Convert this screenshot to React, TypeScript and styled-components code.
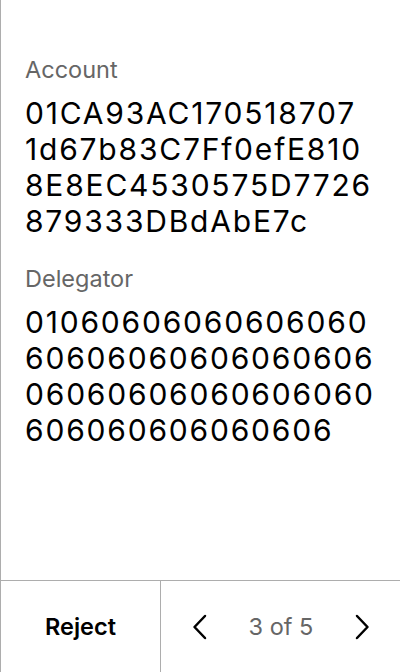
import styled, { createGlobalStyle } from 'styled-components'

const GlobalStyle = createGlobalStyle`
  html, body {
    margin: 0;
    padding: 0;
    background: #ffffff;
  }
  body {
    font-family: Inter, "Noto Sans", sans-serif;
    color: #000;
  }
`

const Screen = styled.div`
  display: flex;
  flex-direction: column;
  width: 400px;
  height: 672px;
  box-sizing: border-box;
  border-left: 1px solid #adadad;
`

const Content = styled.main`
  flex: 1;
  padding: 55px 20px 0 24px;
`

const Field = styled.section`
  display: flex;
  flex-direction: column;
  margin-bottom: 25px;
`

const Label = styled.div`
  font-size: 23.5px;
  line-height: 30px;
  margin-bottom: 10px;
  color: #666666;
`

const Value = styled.div`
  font-size: 30px;
  line-height: 36px;
  letter-spacing: 1.8px;
  color: #000;
`

const Line = styled.span`
  display: block;
  white-space: nowrap;
`

const Footer = styled.footer`
  display: flex;
  height: 92px;
  box-sizing: border-box;
  border-top: 1px solid #adadad;
`

const RejectButton = styled.button`
  width: 160px;
  border: none;
  border-right: 1px solid #adadad;
  background: none;
  font-family: inherit;
  font-size: 23.5px;
  font-weight: 600;
  color: #000;
  padding: 0;
`

const Pager = styled.div`
  flex: 1;
  display: flex;
  align-items: center;
  justify-content: space-between;
  padding: 0 26px 0 27px;
`

const ArrowButton = styled.button`
  display: flex;
  align-items: center;
  justify-content: center;
  width: 24px;
  height: 26px;
  border: none;
  background: none;
  padding: 0;
`

const PageText = styled.span`
  font-size: 23.5px;
  color: #666666;
`

const Chevron = ({ dir }: { dir: 'left' | 'right' }) => (
  <svg width="16" height="26" viewBox="0 0 16 26" fill="none">
    <path
      d={dir === 'left' ? 'M13 2L2.5 13L13 24' : 'M3 2L13.5 13L3 24'}
      stroke="#000"
      strokeWidth="2.5"
      strokeLinecap="round"
      strokeLinejoin="round"
    />
  </svg>
)

const fields = [
  {
    label: 'Account',
    lines: ['01CA93AC170518707', '1d67b83C7Ff0efE810', '8E8EC4530575D7726', '879333DBdAbE7c'],
  },
  {
    label: 'Delegator',
    lines: ['01060606060606060', '60606060606060606', '06060606060606060', '606060606060606'],
  },
]

export default function App() {
  return (
    <>
      <GlobalStyle />
      <Screen>
        <Content>
          {fields.map((f) => (
            <Field key={f.label}>
              <Label>{f.label}</Label>
              <Value>
                {f.lines.map((l, i) => (
                  <Line key={i}>{l}</Line>
                ))}
              </Value>
            </Field>
          ))}
        </Content>
        <Footer>
          <RejectButton>Reject</RejectButton>
          <Pager>
            <ArrowButton aria-label="previous">
              <Chevron dir="left" />
            </ArrowButton>
            <PageText>3 of 5</PageText>
            <ArrowButton aria-label="next">
              <Chevron dir="right" />
            </ArrowButton>
          </Pager>
        </Footer>
      </Screen>
    </>
  )
}
